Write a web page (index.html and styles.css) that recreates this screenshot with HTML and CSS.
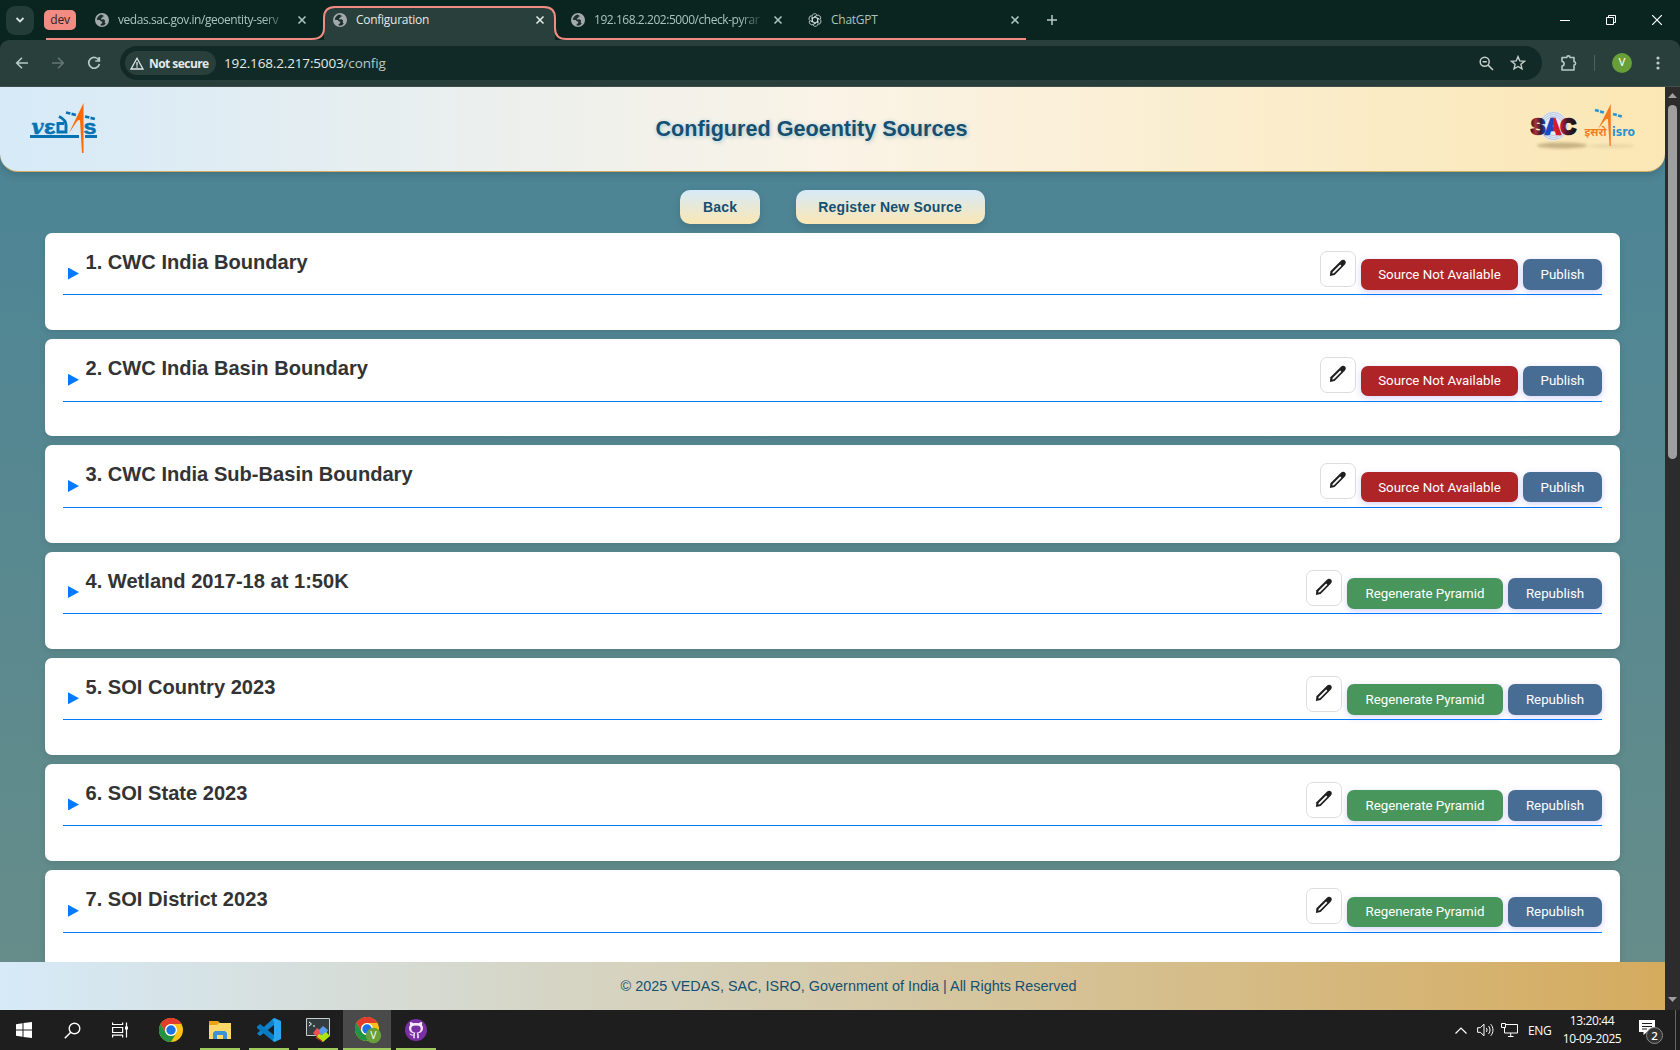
FILE: index.html
```html
<!DOCTYPE html>
<html lang="en">
<head>
<meta charset="utf-8">
<title>Configuration</title>
<link rel="stylesheet" href="styles.css">
</head>
<body>
<svg class="defs" width="0" height="0" aria-hidden="true">
  <symbol id="globe" viewBox="0 0 14 14"><circle cx="7" cy="7" r="7" fill="#a3aaad"/><path d="M6.3 1.6C4 2.5 2 4.400 1.700 6.700l3 .3 1 1.300 1.700.4-.5 1.700-1.300.5.2 1.700c2 .3 3.700-.4 4.900-1.900l-1-1.500.4-1.700-1.500-1.200-2.400.2-.5-1 1.500-.6.5-1.300 1.800-.3z" fill="#1c302e"/></symbol>
  <symbol id="close" viewBox="0 0 10 10"><path d="M1.500 1.500l7 7m0-7l-7 7" fill="none" stroke="currentColor" stroke-width="1.600"/></symbol>
  <symbol id="pencil" viewBox="0 0 18 18"><path d="M.9 17.100l.5-4.900L11.700 1.900c1.500-1.400 3.200-1.400 4.300-.3s1.100 2.700-.3 4.200L5.600 16z" fill="#1f1f1f"/><path d="M3.300 14.600l.3-1.700 7.500-7.500 1.300 1.300-7.500 7.500z" fill="#fff"/></symbol>
  <symbol id="chrome" viewBox="0 0 24 24"><circle cx="12" cy="12" r="12" fill="#fbc116"/><path d="M1.600 6A12 12 0 0 1 22.400 6H12a6 6 0 0 0-5.200 9z" fill="#e33b2e"/><path d="M1.600 6A12 12 0 0 0 12 24l5.200-9A6 6 0 0 1 6.800 15z" fill="#229342"/><circle cx="12" cy="12" r="6" fill="#fff"/><circle cx="12" cy="12" r="4.700" fill="#1a73e8"/></symbol>
</svg>

<header class="tabstrip">
  <button class="tab-search"><svg width="10" height="8" viewBox="0 0 10 8"><path d="M1.500 2L5 5.500 8.500 2" fill="none" stroke="#d5e2df" stroke-width="1.800"/></svg></button>
  <span class="tab-group">dev</span>
  <div class="tabs">
    <div class="tab tab-a"><svg class="fav"><use href="#globe"/></svg><span class="tab-title fade">vedas.sac.gov.in/geoentity-serv</span><svg class="x"><use href="#close"/></svg></div>
    <div class="tab tab-b active"><svg class="fav"><use href="#globe"/></svg><span class="tab-title">Configuration</span><svg class="x"><use href="#close"/></svg></div>
    <div class="tab tab-c"><svg class="fav"><use href="#globe"/></svg><span class="tab-title fade">192.168.2.202:5000/check-pyrar</span><svg class="x"><use href="#close"/></svg></div>
    <div class="tab tab-d"><svg class="fav" viewBox="0 0 16 16"><g fill="none" stroke="#d4dedb" stroke-width=".9"><path id="petal" d="M4.500 7V4a3.200 3.200 0 0 1 5.800-1.900M4.500 6.500L8 4.500l4.500 2.600"/><use href="#petal" transform="rotate(60 8 8)"/><use href="#petal" transform="rotate(120 8 8)"/><use href="#petal" transform="rotate(180 8 8)"/><use href="#petal" transform="rotate(240 8 8)"/><use href="#petal" transform="rotate(300 8 8)"/></g></svg><span class="tab-title">ChatGPT</span><svg class="x"><use href="#close"/></svg></div>
    <svg class="group-line" width="982" height="40" viewBox="0 0 982 40"><path d="M0 39H266C274 39 278 35 278 28V18C278 11 282 7 289 7H498C505 7 509 11 509 18V28C509 35 513 39 520 39H980" fill="none" stroke="#f28b82" stroke-width="2"/></svg>
  </div>
  <svg class="plus" width="12" height="12" viewBox="0 0 12 12"><path d="M6 1v10M1 6h10" stroke="#b9ccc7" stroke-width="1.500"/></svg>
  <div class="win">
    <svg width="10" height="10"><path d="M0 5.500h10" stroke="#fff"/></svg>
    <svg width="10" height="10"><path d="M.5 2.500h7v7h-7zM2.500 2.500v-2h7v7h-2" fill="none" stroke="#fff"/></svg>
    <svg width="10" height="10"><path d="M0 0l10 10M10 0L0 10" stroke="#fff" stroke-width="1.200"/></svg>
  </div>
</header>

<div class="toolbar-back">
<nav class="toolbar">
  <svg class="nav-icon" width="14" height="14" viewBox="0 0 14 14"><path d="M13 7H1.800M7 1.700L1.700 7 7 12.300" fill="none" stroke="#b4cbc5" stroke-width="1.600"/></svg>
  <svg class="nav-icon" width="14" height="14" viewBox="0 0 14 14"><path d="M1 7h11.200M7 1.700L12.300 7 7 12.300" fill="none" stroke="#647772" stroke-width="1.600"/></svg>
  <svg class="nav-icon" width="14" height="14" viewBox="0 0 14 14"><path d="M12 4.500A5.400 5.400 0 1 0 12.400 8M12.300 1v4H8.300" fill="none" stroke="#b4cbc5" stroke-width="1.700"/></svg>
  <div class="omnibox">
    <span class="chip"><svg width="14" height="13" viewBox="0 0 14 13"><path d="M7 1.300L13 12H1z" fill="none" stroke="#dfe8e5" stroke-width="1.300"/><path d="M7 5v3.700M7 9.300v1.400" stroke="#dfe8e5" stroke-width="1.300"/></svg><b>Not secure</b></span>
    <span class="url">192.168.2.217:5003<i>/config</i></span>
    <svg class="mag" width="15" height="15" viewBox="0 0 15 15"><circle cx="5.700" cy="5.700" r="4.500" fill="none" stroke="#c5d0cd" stroke-width="1.500"/><path d="M3.600 5.700h4.200M9 9l5 5" stroke="#c5d0cd" stroke-width="1.600"/></svg>
    <svg class="star" width="16" height="16" viewBox="0 0 16 16"><path d="M8 1.600l1.800 4.300 4.700.4-3.600 3 1.100 4.600L8 11.500l-4 2.400 1.100-4.600-3.600-3 4.700-.4z" fill="none" stroke="#c5d0cd" stroke-width="1.400"/></svg>
  </div>
  <svg class="puzzle" width="18" height="18" viewBox="0 0 18 18"><path d="M2 3.500h4.800a1.600 1.600 0 0 1 3.200 0h4v4.300a1.600 1.600 0 0 1 0 3.200v5H2v-4c2.800-.2 2.800-4.300 0-4.500z" fill="none" stroke="#b4cbc5" stroke-width="1.600" stroke-linejoin="round"/></svg>
  <span class="bar"></span>
  <span class="avatar">V</span>
  <svg width="4" height="14" viewBox="0 0 4 14"><g fill="#b9ccc7"><circle cx="2" cy="2" r="1.600"/><circle cx="2" cy="7" r="1.600"/><circle cx="2" cy="12" r="1.600"/></g></svg>
</nav>
</div>

<div class="viewport">
  <div class="page">
    <header class="site-header">
      <svg class="vedas" width="67" height="52" viewBox="0 0 67 52">
        <g fill="#0873b3" stroke="#0873b3" stroke-width=".5"><text x="1.500" y="31.500" font-family="DejaVu Serif" font-weight="bold" font-style="italic" font-size="20" textLength="12" lengthAdjust="spacingAndGlyphs">v</text><text x="14" y="31.500" font-family="Liberation Sans" font-weight="bold" font-size="20" textLength="11.500" lengthAdjust="spacingAndGlyphs">ε</text><text x="53.500" y="31.500" font-family="Liberation Sans" font-weight="bold" font-size="21" textLength="13" lengthAdjust="spacingAndGlyphs">s</text></g>
        <path d="M0 33h49v3H0zM55 33h12v3H55z" fill="#0873b3"/>
        <path d="M34 21.500H28V30H36V23C36 19 33 16.500 29 14.500" fill="none" stroke="#0873b3" stroke-width="2.900"/>
        <path d="M36 10.500l10 2.500M55 14.500l10 2.500" stroke="#0873b3" stroke-width="2.600" stroke-dasharray="4.500 1.200"/>
        <path d="M53.500 1v50H52l-2-33-2.500.5L39 31z" fill="#ff6a00"/>
      </svg>
      <h1>Configured Geoentity Sources</h1>
      <svg class="sac" width="109" height="52" viewBox="0 0 109 52">
        <defs><linearGradient id="sacfill"><stop offset="0" stop-color="#3b1424"/><stop offset=".1" stop-color="#b52c35"/><stop offset=".22" stop-color="#2e1d38"/><stop offset=".34" stop-color="#1d4bc8"/><stop offset=".48" stop-color="#2443b8"/><stop offset=".5" stop-color="#df1928"/><stop offset=".66" stop-color="#c81b33"/><stop offset=".8" stop-color="#421b2e"/><stop offset="1" stop-color="#111"/></linearGradient>
        <filter id="soft" x="-20%" y="-100%" width="140%" height="300%"><feGaussianBlur stdDeviation="1.800"/></filter></defs>
        <ellipse cx="36" cy="42.500" rx="25" ry="3" fill="#8f7a4c" opacity=".5" filter="url(#soft)"/>
        <ellipse cx="86" cy="43" rx="24" ry="1.500" fill="#8f7a4c" opacity=".2" filter="url(#soft)"/>
        <ellipse cx="27.500" cy="23" rx="14" ry="14.500" fill="#e6edf8"/>
        <g fill="none" stroke="#94a6cc" stroke-width=".6"><circle cx="27.500" cy="23" r="13.500"/><circle cx="27.500" cy="23" r="11.500"/><circle cx="27.500" cy="23" r="9.500"/></g>
        <text x="5" y="31" font-family="Liberation Sans" font-weight="bold" font-size="22.500" textLength="45" lengthAdjust="spacingAndGlyphs" fill="url(#sacfill)" stroke="url(#sacfill)" stroke-width="2.400">SAC</text>
        <text x="58.500" y="33" font-family="Noto Sans Devanagari, Noto Sans, sans-serif" font-weight="bold" font-size="11" textLength="22" lengthAdjust="spacingAndGlyphs" fill="#f47c20">इसरो</text>
        <text x="86" y="33" font-family="DejaVu Sans" font-weight="bold" font-size="11.500" textLength="23" lengthAdjust="spacingAndGlyphs" fill="#2a93cf">isro</text>
        <path d="M69 7l9 2.500M87 11l9 2.500" stroke="#2a93cf" stroke-width="2.600" stroke-dasharray="4 1.200"/>
        <path d="M84.800 1v42h-1.200l-1.700-27-2.300.5L72 26z" fill="#f47c20"/>
      </svg>
    </header>
    <div class="actions"><button class="pill">Back</button><button class="pill">Register New Source</button></div>
    <main class="cards">
      <section class="card"><div class="head"><span class="tri"></span><h2>1. CWC India Boundary</h2><button class="edit"><svg><use href="#pencil"/></svg></button><button class="btn red">Source Not Available</button><button class="btn blue pub">Publish</button></div></section>
      <section class="card"><div class="head"><span class="tri"></span><h2>2. CWC India Basin Boundary</h2><button class="edit"><svg><use href="#pencil"/></svg></button><button class="btn red">Source Not Available</button><button class="btn blue pub">Publish</button></div></section>
      <section class="card"><div class="head"><span class="tri"></span><h2>3. CWC India Sub-Basin Boundary</h2><button class="edit"><svg><use href="#pencil"/></svg></button><button class="btn red">Source Not Available</button><button class="btn blue pub">Publish</button></div></section>
      <section class="card"><div class="head"><span class="tri"></span><h2>4. Wetland 2017-18 at 1:50K</h2><button class="edit"><svg><use href="#pencil"/></svg></button><button class="btn green">Regenerate Pyramid</button><button class="btn blue">Republish</button></div></section>
      <section class="card"><div class="head"><span class="tri"></span><h2>5. SOI Country 2023</h2><button class="edit"><svg><use href="#pencil"/></svg></button><button class="btn green">Regenerate Pyramid</button><button class="btn blue">Republish</button></div></section>
      <section class="card"><div class="head"><span class="tri"></span><h2>6. SOI State 2023</h2><button class="edit"><svg><use href="#pencil"/></svg></button><button class="btn green">Regenerate Pyramid</button><button class="btn blue">Republish</button></div></section>
      <section class="card"><div class="head"><span class="tri"></span><h2>7. SOI District 2023</h2><button class="edit"><svg><use href="#pencil"/></svg></button><button class="btn green">Regenerate Pyramid</button><button class="btn blue">Republish</button></div></section>
    </main>
    <footer class="site-footer">© 2025 VEDAS, SAC, ISRO, Government of India | All Rights Reserved</footer>
  </div>
  <div class="scrollbar">
    <svg width="9" height="5"><path d="M0 5L4.500 0 9 5z" fill="#9f9f9f"/></svg>
    <span class="thumb"></span>
    <svg class="down" width="9" height="5"><path d="M0 0h9L4.500 5z" fill="#9f9f9f"/></svg>
  </div>
</div>

<div class="taskbar">
  <span class="task"><svg width="16" height="16"><path d="M0 2.300L6.500 1.300V7.500H0zM7.500 1.100L16 0v7.500H7.500zM0 8.500h6.500v6.200L0 13.700zM7.500 8.500H16V16l-8.500-1.100z" fill="#fff"/></svg></span>
  <span class="task"><svg width="17" height="17"><circle cx="10.500" cy="6.500" r="5.300" fill="none" stroke="#fff" stroke-width="1.400"/><path d="M6.800 10.200L.8 16.200" stroke="#fff" stroke-width="1.500"/></svg></span>
  <span class="task"><svg width="17" height="16" fill="none" stroke="#fff" stroke-width="1.200"><path d="M.6.500v2h10v-2M.6 15.500v-2.300h10v2.300M.6 5.500h10v5H.6zM14.500.5v15"/><path d="M13 4.500h3v3h-3z" fill="#fff" stroke="none"/></svg></span>
  <span class="task chrome1"><svg width="24" height="24"><use href="#chrome"/></svg></span>
  <span class="task run"><svg width="22" height="19"><path d="M0 0h9l2 2h11v16H0z" fill="#e8a317"/><path d="M0 4h8l2-2h12v16H0z" fill="#ffd76b"/><path d="M4 18v-6l2-2h10l2 2v6h-4v-4H8v4z" fill="#3b93d6"/></svg></span>
  <span class="task run"><svg width="24" height="24" viewBox="0 0 24 24"><path d="M17 0v7L3 18l-3-2.600L15.500 1z" fill="#0f84cc"/><path d="M0 8.600L3 6l14 11v7L0 10z" fill="#087bc2"/><path d="M17.500 0L24 3v18l-6.500 3-2-2L17 20V4l-1.500-2.300z" fill="#29a7f2"/></svg></span>
  <span class="task run"><svg width="24" height="24" viewBox="0 0 24 24"><path d="M.5.500h23v17H.5z" fill="#333d40" stroke="#c8cdcd"/><path d="M3 4l2.500 2L3 8M7 8h2" fill="none" stroke="#fff"/><path d="M7 15l4-5 3 2 2 3-4 5z" fill="#f15050"/><path d="M13 12l4-4 5 4-2 4-5 1z" fill="#579be9"/><path d="M10 20l3-4 3 1 4-3 4 4-7 6z" fill="#aee511"/><path d="M11 19l5 3.500v1.500l-7-5z" fill="#b41e27"/></svg></span>
  <span class="task run current"><svg width="27" height="27" viewBox="0 0 27 27"><use href="#chrome" width="24" height="24"/><circle cx="18.500" cy="18.500" r="7.700" fill="#689f38"/><text x="18.500" y="22.300" font-family="Open Sans" font-size="10.500" fill="#fff" text-anchor="middle">V</text></svg></span>
  <span class="task run"><svg width="22" height="22" viewBox="0 0 22 22"><circle cx="11" cy="11" r="11" fill="#7b2fa4"/><path d="M8.300 19.300v-2.800c-2.700.5-3-1.300-4.100-1.800 1.700-.5 2.100 1.600 4.100.9l.6-1.300C5.500 13.700 4 12 4 9c0-1.200.4-2.200 1.100-3-.4-1-.3-2 .1-3 1.200 0 2.200.6 3.100 1.300 1.800-.5 3.600-.5 5.400 0 .9-.7 1.900-1.300 3.100-1.300.4 1 .5 2 .1 3 .7.800 1.100 1.800 1.100 3 0 3-1.500 4.700-4.900 5.300.5.500.7 1.200.7 2v3z" fill="#f3eafa"/><path d="M9.800 20v-4.600c0-.7.200-1.300.7-1.700-2.800-.3-4.200-1.600-4.200-4.100 0-2 1.300-3 4.700-3s4.700 1 4.700 3c0 2.500-1.400 3.800-4.200 4.100.5.400.7 1 .7 1.700V20z" fill="#7b2fa4"/></svg></span>
  <div class="tray">
    <svg width="12" height="7"><path d="M.5 6.500L6 1l5.500 5.500" fill="none" stroke="#fff" stroke-width="1.200"/></svg>
    <svg class="spk" width="17" height="14" fill="none" stroke="#fff"><path d="M.6 4.700h2.700L7 1.200v11.600L3.300 9.300H.6zM9.300 5c1 1.200 1 2.800 0 4M11.500 3c2 2.500 2 5.500 0 8M13.700 1.200c3 3.500 3 8 0 11.600"/></svg>
    <svg class="net" width="17" height="14" fill="none" stroke="#fff"><path d="M5 1.500h11.500v8.500H3.500V5M7 13.500h5.500M9.700 10v3.500M.5.500h4v4h-4z"/></svg>
    <span class="lang">ENG</span>
    <div class="clock"><span>13:20:44</span><span>10-09-2025</span></div>
    <svg class="note" width="24" height="25" viewBox="0 0 24 25"><path d="M0 0h16v12h-8l-3.500 3v-3H0z" fill="#fff"/><path d="M3 3.500h10M3 6.500h10M3 9h5" stroke="#1e1e1e"/><circle cx="15.500" cy="15.500" r="8" fill="#333" stroke="#8a8a8a"/><text x="15.500" y="19.500" font-family="Open Sans" font-size="11.500" font-weight="600" fill="#fff" text-anchor="middle">2</text></svg>
    <span class="peek"></span>
  </div>
</div>
</body>
</html>
```
FILE: styles.css
```css
* { box-sizing: border-box; }
body { margin: 0; width: 1680px; height: 1050px; overflow: hidden; display: flex; flex-direction: column; background: #0a2420; font-family: "Liberation Sans", Arial, sans-serif; }
button { border: 0; padding: 0; margin: 0; font: inherit; }
svg { flex: none; display: block; }
.defs { position: absolute; }

/* browser tabs */
.tabstrip { height: 40px; flex: none; display: flex; align-items: center; background: #0a2420; color: #a9c4bd; font: 12px "Open Sans", "Noto Sans", sans-serif; }
.tab-search { width: 28px; height: 29px; margin-left: 6px; border-radius: 9px; background: #243c38; display: grid; place-items: center; }
.tab-group { width: 32px; height: 20px; margin-left: 10px; border-radius: 5px; background: #f28b82; color: #2c2423; display: grid; place-items: center; letter-spacing: -.2px; line-height: 18px; }
.tabs { display: flex; height: 40px; position: relative; margin-left: 6px; }
.group-line { position: absolute; left: -36px; top: 0; }
.tab { display: flex; align-items: center; }
.tab-a { width: 239px; padding-left: 13px; }
.tab-b { width: 238px; padding-left: 12px; }
.tab-c { width: 238px; padding-left: 12px; }
.tab-d { width: 240px; padding-left: 11px; }
.tab.active { color: #e1eae7; }
.tab.active::before { content: ""; width: 231px; height: 34px; position: absolute; left: 242px; top: 6px; border-radius: 11px 11px 0 0; background: #293f3b; }
.tab > * { position: relative; }
.fav { width: 14px; height: 14px; }
.tab-title { width: 169px; margin-left: 9px; white-space: nowrap; letter-spacing: -.27px; line-height: 18px; }
.tab-a .tab-title { letter-spacing: -.45px; }
.tab-c .tab-title { letter-spacing: -.45px; }
.fade { -webkit-mask-image: linear-gradient(90deg, #000 145px, transparent 172px); mask-image: linear-gradient(90deg, #000 145px, transparent 172px); }
.x { width: 10px; height: 10px; margin-left: 10px; }
.plus { margin-left: 9px; }
.win { display: flex; gap: 36px; margin-left: auto; margin-right: 18px; }

/* address bar */
.toolbar-back { background: #0a2420; flex: none; }
.toolbar { height: 47px; border-bottom: 1px solid #43514e; border-radius: 9px 9px 0 0; background: #293f3b; display: flex; align-items: center; padding: 0 19px 0 15px; }
.nav-icon { margin-right: 22px; }
.omnibox { width: 1422px; height: 34px; margin-left: -3px; border-radius: 17px; background: #122a27; display: flex; align-items: center; padding-left: 5px; font: 13.500px "Open Sans", "Noto Sans", sans-serif; color: #e4eae8; }
.chip { width: 91px; height: 24px; border-radius: 12px; background: #293f3b; display: flex; align-items: center; padding-left: 5px; gap: 5px; font-size: 12px; white-space: nowrap; }
.chip b { font-weight: 700; letter-spacing: -.55px; }
.url { margin-left: 8px; letter-spacing: -.15px; }
.url i { font-style: normal; color: #bac8c4; }
.mag { margin-left: auto; }
.star { margin: 0 16px; }
.puzzle { margin-left: 18px; }
.bar { width: 1px; height: 16px; margin: 0 17px 0 16px; background: #4d625d; }
.avatar { width: 20px; height: 20px; margin-right: 24px; border-radius: 50%; background: #689f38; color: #fff; font: 11px/20px "Roboto", sans-serif; text-align: center; }

/* web page */
.viewport { height: 923px; flex: none; display: flex; }
.page { width: 1665px; display: flex; flex-direction: column; background: linear-gradient(#4a8497, #678d89); }
.site-header { height: 85px; flex: none; display: flex; align-items: center; justify-content: space-between; padding: 0 30px; border-bottom: 1px solid #d5ab5e; border-radius: 0 0 18px 18px; background: linear-gradient(90deg, #d6eaf8, #faf3e6 50%, #fbe7b4); box-shadow: 0 3px 9px rgba(0, 0, 0, .15); }
h1 { margin: 0; font-size: 21.600px; color: #154f71; text-shadow: 1px 1px 4px rgba(21, 130, 170, .4); }
.vedas { margin-bottom: 3px; }
.actions { display: flex; justify-content: center; gap: 36px; padding-top: 18px; height: 61px; flex: none; }
.pill { height: 34px; padding: 0 22.500px; border-radius: 10px; background: linear-gradient(#d6eaf8, #fbe7b4); box-shadow: 0 4px 9px rgba(0, 0, 0, .12); font-size: 14px; font-weight: bold; letter-spacing: .2px; color: #154f71; }
.cards { flex: 1; min-height: 0; overflow: hidden; padding: 0 45px; display: flex; flex-direction: column; gap: 9px; }
.card { height: 97.200px; flex: none; border-radius: 7px; background: #fff; padding: 18px 18px 0; box-shadow: 0 2px 7px rgba(0, 0, 0, .1); }
.head { height: 44.400px; display: flex; border-bottom: 1px solid #007bff; }
.tri { width: 11px; height: 12px; margin: 16.500px 6.500px 0 5px; background: #007bff; clip-path: polygon(0 0, 100% 50%, 0 100%); }
h2 { margin: 0; font-size: 20.100px; line-height: 22px; color: #333; flex: 1; }
.edit { width: 36px; height: 36px; border: 1px solid #ddd; border-radius: 7px; background: #fff; display: grid; place-items: center; }
.edit svg { width: 18px; height: 18px; margin-top: -2px; }
.btn { height: 30.600px; margin: 8.400px 0 0 5px; border-radius: 7px; color: #fff; font: 400 13.300px "Roboto", sans-serif; box-shadow: 0 2px 7px rgba(70, 60, 240, .22); }
.red { width: 157px; background: #ae2427; }
.green { width: 156px; background: #49965c; }
.blue { width: 94px; background: #486d95; }
.pub { width: 79px; }
.site-footer { height: 48px; flex: none; padding-left: 32px; text-align: center; font-size: 14.400px; line-height: 48px; color: #154f71; background: linear-gradient(90deg, #d6eaf8, #d5ab5e); }
.scrollbar { width: 15px; background: #2c2c2c; display: flex; flex-direction: column; align-items: center; padding: 6px 0 8px; }
.thumb { width: 9px; height: 354px; margin-top: 7px; border-radius: 5px; background: #9f9f9f; }
.down { margin-top: auto; }

/* desktop taskbar */
.taskbar { height: 40px; flex: none; display: flex; background: #1e1e1e; color: #fff; font: 12px "Open Sans", "Noto Sans", sans-serif; }
.task { width: 48px; display: grid; place-items: center; border-bottom: 2px solid transparent; padding-top: 2px; }
.chrome1 { margin-left: 3px; }
.run { width: 40px; margin-left: 9px; border-color: #9fcb5c; }
.chrome1 + .run { margin-left: 5px; }
.current { width: 48px; margin-left: 5px; background: #4a4a4a; }
.current svg { margin: 1px 0 0 3px; }
.current + .run { margin-left: 5px; }
.tray { margin-left: auto; display: flex; align-items: center; }
.spk { margin-left: 10px; }
.net { margin-left: 7px; }
.lang { margin-left: 10px; width: 24px; letter-spacing: -.3px; }
.clock { width: 70px; margin-left: 5px; display: flex; flex-direction: column; text-align: center; line-height: 18px; letter-spacing: -.4px; }
.note { margin: 4px 0 0 12px; }
.peek { width: 1px; height: 40px; margin: 0 4px 0 12px; background: #666; }
```
